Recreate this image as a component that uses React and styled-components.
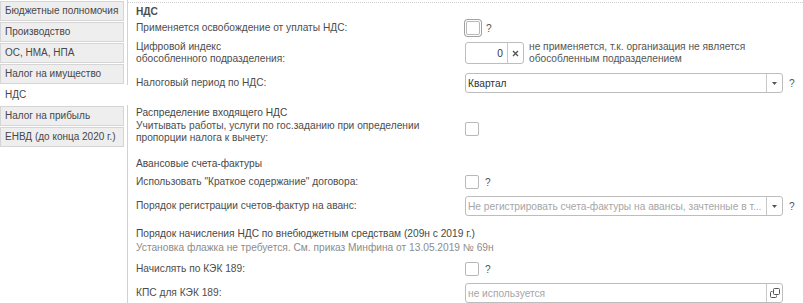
import React from "react";
import styled, { createGlobalStyle } from "styled-components";

const GlobalStyle = createGlobalStyle`
  html, body {
    margin: 0;
    padding: 0;
    background: #fff;
  }
  body {
    font-family: "Liberation Sans", Arial, sans-serif;
    font-size: 10.2px;
    color: #4d4d4d;
  }
`;

const Page = styled.div`
  display: flex;
  width: 803px;
  height: 303px;
  overflow: hidden;
`;

const Sidebar = styled.div`
  width: 127px;
  flex: none;
  border-right: 1px solid #d2d2d2;
  padding-top: 1px;
  display: flex;
  flex-direction: column;
  gap: 1px;
`;

const Tab = styled.div`
  height: 18px;
  line-height: 18px;
  padding-left: 4px;
  font-size: 10px;
  width: ${(p) => (p.$active ? "124px" : "118px")};
  margin-right: ${(p) => (p.$active ? "-1px" : "0")};
  background: ${(p) => (p.$active ? "#fff" : "#eeeeee")};
  border: 1px solid ${(p) => (p.$active ? "#fff" : "#d5d5d5")};
  white-space: nowrap;
  overflow: hidden;
  color: #474747;
  position: relative;
`;

const Content = styled.div`
  flex: 1;
  border-top: 1px dotted #cfcfcf;
  margin-top: 2px;
  padding-left: 8px;
  display: flex;
  flex-direction: column;
`;

const Title = styled.div`
  height: 16px;
  line-height: 16px;
  margin-top: 1px;
  font-weight: bold;
  color: #4d4d4d;
`;

const Heading = styled.div`
  height: 14px;
  line-height: 14px;
  margin-top: ${(p) => p.$mt || 0}px;
  color: #474747;
`;

const Note = styled.div`
  height: 14px;
  line-height: 14px;
  color: #8c8c8c;
`;

const Row = styled.div`
  display: flex;
  align-items: ${(p) => (p.$top ? "flex-start" : "center")};
  height: ${(p) => p.$h}px;
  margin-top: ${(p) => p.$mt || 0}px;
`;

const Label = styled.div`
  width: 329px;
  flex: none;
  line-height: 12px;
`;

const Control = styled.div`
  display: flex;
  align-items: ${(p) => (p.$top ? "flex-start" : "center")};
  margin-top: ${(p) => p.$mt || 0}px;
`;

const Check = styled.div`
  width: 12px;
  height: 12px;
  border: 1px solid #b8b8b8;
  border-radius: 2px;
  background: #fff;
  box-shadow: ${(p) => (p.$focus ? "0 0 0 1px #fff, 0 0 0 2px #a0a0a0" : "none")};
  margin-left: ${(p) => (p.$focus ? "1px" : "0")};
`;

const Help = styled.span`
  margin-left: 6px;
  color: #555;
`;

const Field = styled.div`
  display: flex;
  align-items: stretch;
  width: ${(p) => p.$w}px;
  height: ${(p) => p.$h || 20}px;
  border: 1px solid #bdbdbd;
  border-radius: 3px;
  box-sizing: border-box;
  background: #fff;
`;

const FieldText = styled.div`
  flex: 1;
  display: flex;
  align-items: center;
  justify-content: ${(p) => (p.$right ? "flex-end" : "flex-start")};
  padding: 0 4px 0 2px;
  color: ${(p) => (p.$placeholder ? "#a6a6a6" : "#333")};
  white-space: nowrap;
  overflow: hidden;
`;

const FieldButton = styled.div`
  width: 15px;
  flex: none;
  border-left: 1px solid #c8c8c8;
  display: flex;
  align-items: center;
  justify-content: center;
  color: #555;
`;

const SideNote = styled.div`
  margin-left: 5px;
  line-height: 12px;
  color: #555;
`;

const Arrow = () => (
  <svg width="5" height="3" viewBox="0 0 5 3">
    <path d="M0 0h5L2.5 3z" fill="#555" />
  </svg>
);

const Cross = () => (
  <svg width="7" height="7" viewBox="0 0 7 7">
    <path d="M1 1l5 5M6 1L1 6" stroke="#555" strokeWidth="1.4" />
  </svg>
);

const CopyIcon = () => (
  <svg width="10" height="10" viewBox="0 0 10 10" fill="none" stroke="#555" strokeWidth="1">
    <rect x="3.5" y="0.5" width="6" height="6" rx="1" />
    <path d="M2.5 3.5h-1a1 1 0 0 0-1 1v4a1 1 0 0 0 1 1h4a1 1 0 0 0 1-1v-1" />
  </svg>
);

const tabs = [
  "Бюджетные полномочия",
  "Производство",
  "ОС, НМА, НПА",
  "Налог на имущество",
  "НДС",
  "Налог на прибыль",
  "ЕНВД (до конца 2020 г.)",
];

export default function App() {
  return (
    <>
      <GlobalStyle />
      <Page>
        <Sidebar>
          {tabs.map((t) => (
            <Tab key={t} $active={t === "НДС"}>
              {t}
            </Tab>
          ))}
        </Sidebar>
        <Content>
          <Title>НДС</Title>
          <Row $h={16}>
            <Label>Применяется освобождение от уплаты НДС:</Label>
            <Control>
              <Check $focus />
              <Help>?</Help>
            </Control>
          </Row>
          <Row $h={24} $mt={5}>
            <Label>
              Цифровой индекс
              <br />
              обособленного подразделения:
            </Label>
            <Control>
              <Field $w={59} $h={22}>
                <FieldText $right>0</FieldText>
                <FieldButton>
                  <Cross />
                </FieldButton>
              </Field>
              <SideNote>
                не применяется, т.к. организация не является
                <br />
                обособленным подразделением
              </SideNote>
            </Control>
          </Row>
          <Row $h={20} $mt={8}>
            <Label>Налоговый период по НДС:</Label>
            <Control>
              <Field $w={318}>
                <FieldText>Квартал</FieldText>
                <FieldButton>
                  <Arrow />
                </FieldButton>
              </Field>
              <Help>?</Help>
            </Control>
          </Row>
          <Heading $mt={13}>Распределение входящего НДС</Heading>
          <Row $h={24} $top>
            <Label>
              Учитывать работы, услуги по гос.заданию при определении
              <br />
              пропорции налога к вычету:
            </Label>
            <Control $mt={2}>
              <Check />
            </Control>
          </Row>
          <Heading $mt={13}>Авансовые счета-фактуры</Heading>
          <Row $h={16} $mt={3}>
            <Label>Использовать "Краткое содержание" договора:</Label>
            <Control>
              <Check />
              <Help>?</Help>
            </Control>
          </Row>
          <Row $h={20} $mt={6}>
            <Label>Порядок регистрации счетов-фактур на аванс:</Label>
            <Control>
              <Field $w={318}>
                <FieldText $placeholder>
                  Не регистрировать счета-фактуры на авансы, зачтенные в т...
                </FieldText>
                <FieldButton>
                  <Arrow />
                </FieldButton>
              </Field>
              <Help>?</Help>
            </Control>
          </Row>
          <Heading $mt={11}>
            Порядок начисления НДС по внебюджетным средствам (209н с 2019 г.)
          </Heading>
          <Note>
            Установка флажка не требуется. См. приказ Минфина от 13.05.2019 № 69н
          </Note>
          <Row $h={16} $mt={6}>
            <Label>Начислять по КЭК 189:</Label>
            <Control>
              <Check />
              <Help>?</Help>
            </Control>
          </Row>
          <Row $h={20} $mt={6}>
            <Label>КПС для КЭК 189:</Label>
            <Control>
              <Field $w={318}>
                <FieldText $placeholder>не используется</FieldText>
                <FieldButton>
                  <CopyIcon />
                </FieldButton>
              </Field>
            </Control>
          </Row>
        </Content>
      </Page>
    </>
  );
}
